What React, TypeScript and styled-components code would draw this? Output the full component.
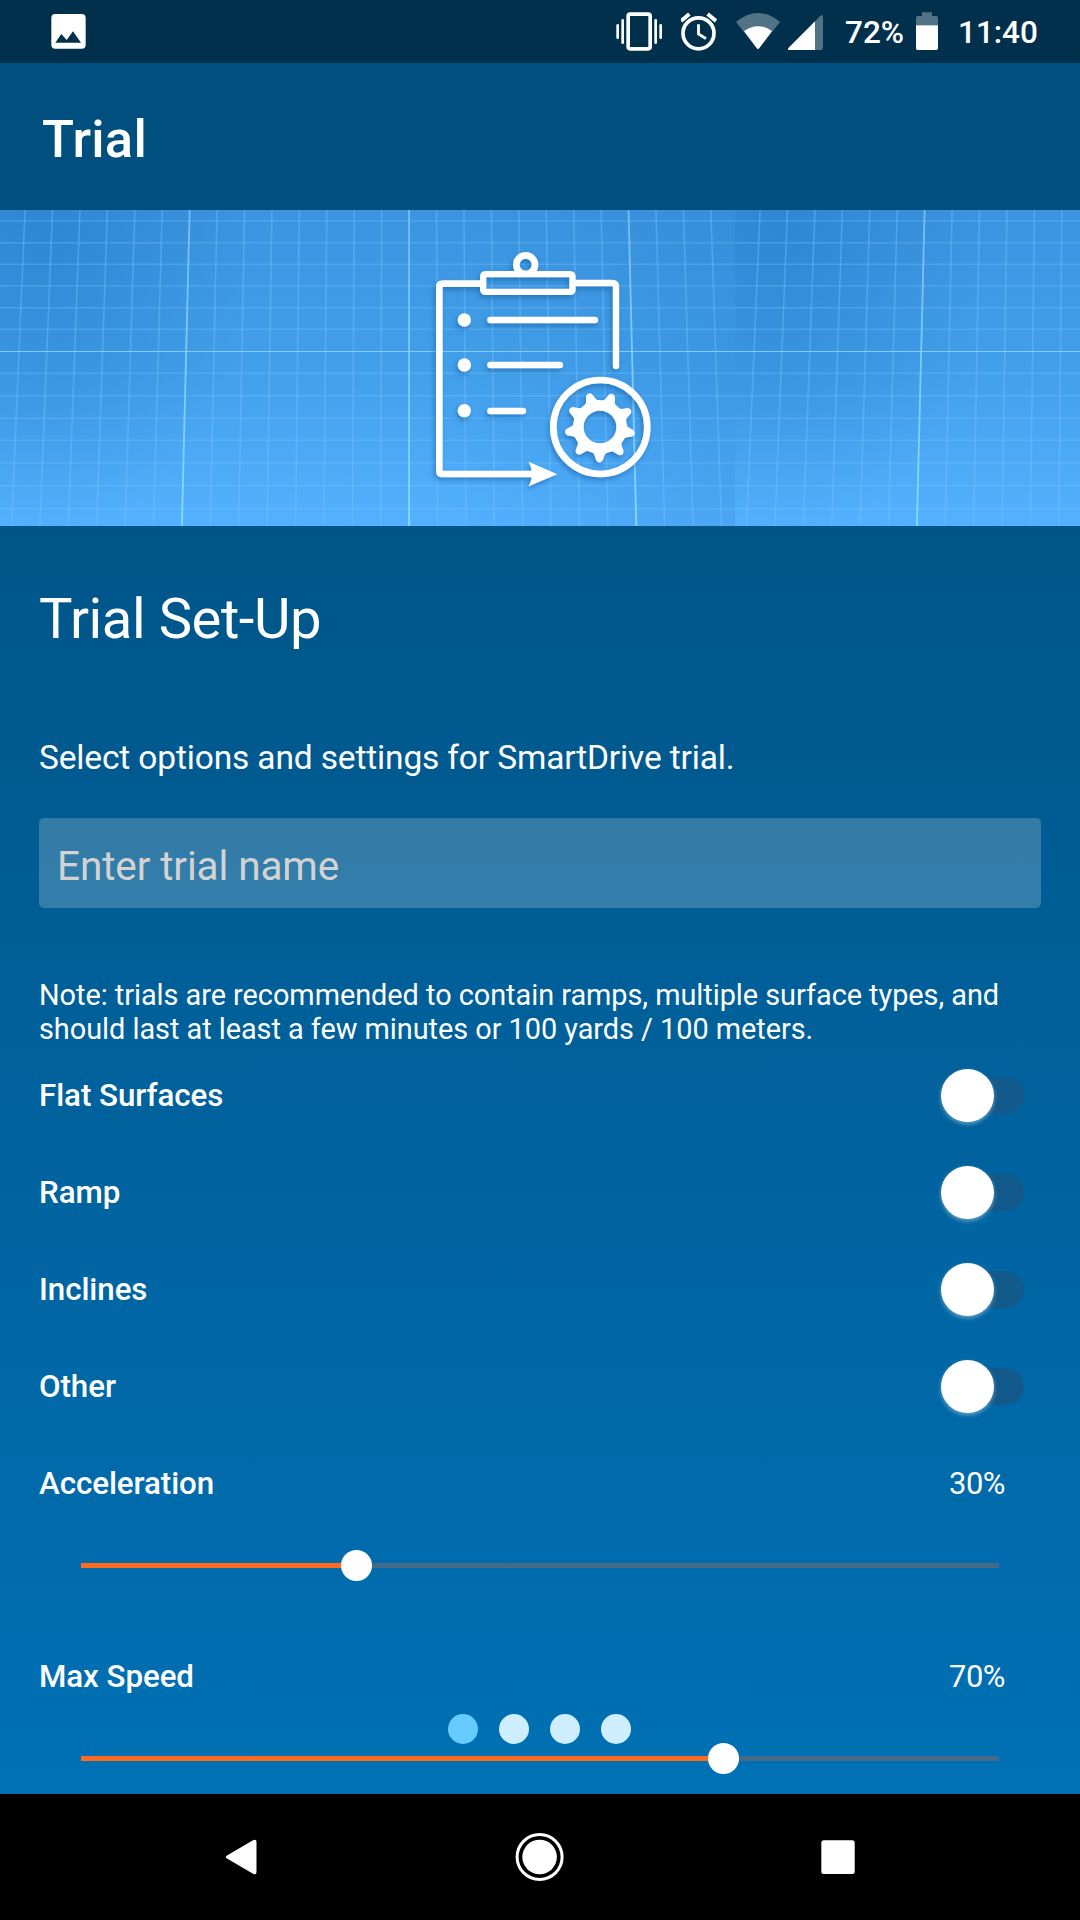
import React, { useState } from "react";
import styled, { createGlobalStyle } from "styled-components";

const GlobalStyle = createGlobalStyle`
  *, *::before, *::after { box-sizing: border-box; }
  html, body { margin: 0; padding: 0; background: #000; }
`;

const Screen = styled.div`
  width: 1080px;
  height: 1920px;
  display: flex;
  flex-direction: column;
  overflow: hidden;
  color: #fff;
  font-family: Roboto, "Noto Sans", sans-serif;
`;

/* ---------- status bar ---------- */

const StatusBar = styled.header`
  flex: none;
  height: 63px;
  padding: 0 43px 0 51px;
  display: flex;
  align-items: center;
  justify-content: space-between;
  background: #00304c;
`;

const StatusGroup = styled.div`
  display: flex;
  align-items: center;
`;

const StatusIcon = styled.svg<{ $gap?: number }>`
  display: block;
  flex: none;
  margin-right: ${(p) => p.$gap ?? 0}px;
`;

const StatusText = styled.span<{ $width: number }>`
  width: ${(p) => p.$width}px;
  font-size: 31.5px;
  font-weight: 500;
  line-height: 63px;
  white-space: nowrap;
  padding-top: 1px;
`;

function PictureIcon() {
  return (
    <StatusIcon width="35" height="35" viewBox="0 0 105 105">
      <path
        fill="#fff"
        fillRule="evenodd"
        d="M13 0H92Q104 0 104 12V92Q104 104 92 104H13Q1 104 1 92V12Q1 0 13 0ZM13 86H90L66 52L47 78L31 60Z"
      />
    </StatusIcon>
  );
}

function SystemIcons() {
  return (
    <>
      <StatusIcon width="46" height="63" viewBox="48 0 138 189" $gap={19}>
        <rect x="84.500" y="42.500" width="66" height="104" rx="6" fill="none" stroke="#fff" strokeWidth="11" />
        <path d="M53 76V113M68 61V128M167 61V128M182 76V113" stroke="#fff" strokeWidth="8" strokeLinecap="round" />
      </StatusIcon>
      <StatusIcon width="36" height="63" viewBox="243 0 108 189" $gap={19}>
        <g fill="none" stroke="#fff">
          <circle cx="295.500" cy="100" r="46.500" strokeWidth="11" />
          <path d="M243 63L268 42M323 42L348 63" strokeWidth="12" />
          <path d="M295.500 73V102L318 116" strokeWidth="8.500" />
        </g>
      </StatusIcon>
      <StatusIcon width="44" height="63" viewBox="408 0 132 189" $gap={8}>
        <path d="M408 66Q474 12 540 66L478 144Q474 149 470 144Z" fill="#fff" fillOpacity=".32" />
        <path d="M432 93Q474 64 516 93L478 144Q474 150 470 144Z" fill="#fff" />
      </StatusIcon>
      <StatusIcon width="35" height="63" viewBox="564 0 105 189" $gap={22}>
        <path d="M645 64L661 47Q669 42 669 50V144Q669 150 663 150H645Z" fill="#fff" fillOpacity=".32" />
        <path d="M645 64V150H567Q561 149 566 143Z" fill="#fff" />
      </StatusIcon>
      <StatusText $width={71}>72%</StatusText>
      <StatusIcon width="22" height="63" viewBox="948 0 66 189" $gap={20}>
        <path d="M948 76V54Q948 48 954 48H966V37H996V48H1008Q1014 48 1014 54V76Z" fill="#fff" fillOpacity=".32" />
        <path d="M948 76H1014V145Q1014 150 1009 150H953Q948 150 948 145Z" fill="#fff" />
      </StatusIcon>
      <StatusText $width={79}>11:40</StatusText>
    </>
  );
}

/* ---------- action bar ---------- */

const ActionBar = styled.div`
  flex: none;
  height: 147px;
  padding: 4px 42px 0;
  display: flex;
  align-items: center;
  background: #00507f;
`;

const ActionTitle = styled.h1`
  margin: 0;
  font-size: 52.5px;
  font-weight: 500;
  line-height: 62px;
  letter-spacing: 0.25px;
`;

/* ---------- banner ---------- */

const Banner = styled.section`
  flex: none;
  height: 316px;
`;

const BannerArt = styled.svg`
  display: block;
`;

const ROWS = [11, 32.7, 54.2, 76, 97.7, 119.3, 163.3, 185.7, 208.3, 230.3, 253, 275.7, 298.7];
const COLUMNS = Array.from({ length: 29 }, (_, i) => i - 16);
const TILE = 735;

function BlueprintTile() {
  return (
    <g>
      <rect width={TILE} height="316" fill="url(#sky)" />
      <rect width={TILE} height="316" fill="url(#shadeLeft)" />
      <rect width={TILE} height="316" fill="url(#shadeRight)" />
      {ROWS.map((y) => (
        <path key={y} d={`M0 ${y}H${TILE}`} stroke="#7cc6ff" strokeOpacity=".33" strokeWidth="1.600" />
      ))}
      {COLUMNS.map((i) => {
        const main = i % 8 === 0;
        return (
          <path
            key={i}
            d={`M${409.1 + i * 27.43} 0L${409.1 + i * 28.4} 316`}
            stroke={main ? "url(#mainLine)" : "#7cc6ff"}
            strokeOpacity={main ? 0.9 : 0.38}
            strokeWidth={main ? 1.8 : 1.6}
          />
        );
      })}
      <path d={`M0 141.500H${TILE}`} stroke="#8fd4ff" strokeOpacity=".85" strokeWidth="1.200" />
    </g>
  );
}

function gearPath(cx: number, cy: number) {
  const point = (r: number, deg: number) => {
    const a = (deg * Math.PI) / 180;
    return `${(cx + r * Math.cos(a)).toFixed(1)} ${(cy + r * Math.sin(a)).toFixed(1)}`;
  };
  let d = "";
  for (let k = 0; k < 9; k++) {
    const a = 91 + k * 40;
    d += `${k ? "L" : "M"}${point(81, a - 14)}L${point(84, a - 11)}L${point(101, a - 5.5)}`;
    d += `Q${point(112, a)} ${point(101, a + 5.5)}L${point(84, a + 11)}L${point(81, a + 14)}`;
  }
  return `${d}ZM${cx - 49} ${cy}a49 49 0 1 0 98 0a49 49 0 1 0 -98 0Z`;
}

function ClipboardDrawing() {
  return (
    <g
      transform="translate(420 20) scale(.33333)"
      filter="url(#drop)"
      fill="none"
      stroke="#fff"
      strokeLinecap="round"
    >
      <circle cx="317" cy="104" r="28" strokeWidth="20" />
      <rect x="189.500" y="132.500" width="268" height="53" rx="6" strokeWidth="19" />
      <path d="M182 161H68Q58 161 58 171V722Q58 732 68 732H338" strokeWidth="20" strokeLinecap="butt" />
      <path d="M465 159H577Q588 159 588 170V408" strokeWidth="19" />
      <path d="M412 733L326 695Q346 733 326 769Z" fill="#fff" stroke="none" />
      <path d="M211 270H525M211 405H420M211 543H309" strokeWidth="19" />
      <g fill="#fff" stroke="none">
        <circle cx="133" cy="270" r="20" />
        <circle cx="133" cy="405" r="20" />
        <circle cx="133" cy="542" r="20" />
      </g>
      <circle cx="541" cy="591" r="141" strokeWidth="20" />
      <path d={gearPath(540, 591)} fill="#fff" fillRule="evenodd" stroke="none" />
    </g>
  );
}

function BlueprintBanner() {
  return (
    <Banner>
      <BannerArt width="1080" height="316" viewBox="0 0 1080 316">
        <defs>
          <linearGradient id="sky" x1="0" y1="0" x2="0" y2="1">
            <stop offset="0" stopColor="#3c94df" />
            <stop offset=".5" stopColor="#429fea" />
            <stop offset="1" stopColor="#54b1ff" />
          </linearGradient>
          <radialGradient id="shadeLeft" gradientUnits="userSpaceOnUse" cx="0" cy="0" r="1" gradientTransform="translate(45 0) scale(210 330)">
            <stop offset="0" stopColor="#1d73bd" stopOpacity=".42" />
            <stop offset=".5" stopColor="#1d73bd" stopOpacity=".22" />
            <stop offset="1" stopColor="#1d73bd" stopOpacity="0" />
          </radialGradient>
          <linearGradient id="shadeRight" x1="0" y1="0" x2="1" y2="0">
            <stop offset=".6" stopColor="#1d73bd" stopOpacity="0" />
            <stop offset="1" stopColor="#1d73bd" stopOpacity=".18" />
          </linearGradient>
          <linearGradient id="mainLine" gradientUnits="userSpaceOnUse" x1="0" y1="0" x2="0" y2="316">
            <stop offset="0" stopColor="#7cc0fb" />
            <stop offset="1" stopColor="#8ae0ff" />
          </linearGradient>
          <clipPath id="tile">
            <rect width={TILE} height="316" />
          </clipPath>
          <filter id="drop" x="-10%" y="-10%" width="120%" height="120%">
            <feDropShadow dx="-5" dy="9" stdDeviation="8" floodColor="#0f4f8f" floodOpacity=".42" />
          </filter>
        </defs>
        <g clipPath="url(#tile)">
          <BlueprintTile />
        </g>
        <g transform={`translate(${TILE} 0)`}>
          <g clipPath="url(#tile)">
            <BlueprintTile />
          </g>
        </g>
        <ClipboardDrawing />
      </BannerArt>
    </Banner>
  );
}

/* ---------- form ---------- */

const Content = styled.main`
  position: relative;
  flex: 1;
  min-height: 0;
  overflow: hidden;
  padding: 59px 39px 0;
  display: flex;
  flex-direction: column;
  background: linear-gradient(#005588, #0071b5);
`;

const Heading = styled.h2`
  flex: none;
  margin: 0 0 84px;
  font-size: 56.2px;
  font-weight: 400;
  line-height: 69px;
  letter-spacing: -0.45px;
`;

const Intro = styled.p`
  flex: none;
  margin: 0 0 40px;
  font-size: 33.5px;
  line-height: 40px;
  letter-spacing: -0.15px;
`;

const NameInput = styled.input`
  flex: none;
  height: 90px;
  margin: 0 0 70px;
  padding: 5px 18px 0;
  border: 0;
  border-radius: 5px;
  outline: 0;
  background: rgba(255, 255, 255, 0.2);
  color: #fff;
  font-family: inherit;
  font-size: 40.5px;
  letter-spacing: -0.12px;
  &::placeholder {
    color: #d3d3d3;
    opacity: 1;
  }
`;

const Note = styled.p`
  flex: none;
  margin: 0 0 1px;
  font-size: 28.875px;
  line-height: 34px;
  letter-spacing: -0.03px;
`;

const Row = styled.div`
  flex: none;
  height: 97px;
  display: flex;
  align-items: center;
  justify-content: space-between;
`;

const RowLabel = styled.span`
  font-size: 31.3px;
  font-weight: 500;
  line-height: 37px;
  letter-spacing: -0.06px;
`;

const RowValue = styled.span`
  margin-right: 36px;
  font-size: 30.9px;
  line-height: 37px;
  letter-spacing: -0.45px;
`;

const Switch = styled.button`
  width: 83px;
  height: 53px;
  margin-right: 17px;
  padding: 0;
  border: 0;
  background: none;
  display: grid;
  align-items: center;
`;

const SwitchTrack = styled.span`
  grid-area: 1 / 1;
  justify-self: end;
  width: 75px;
  height: 37px;
  border-radius: 19px;
  background: #125a8b;
`;

const SwitchThumb = styled.span<{ $on: boolean }>`
  grid-area: 1 / 1;
  justify-self: ${(p) => (p.$on ? "end" : "start")};
  width: 53px;
  height: 53px;
  border-radius: 50%;
  background: #fff;
  box-shadow: 0 2px 4px rgba(255, 255, 255, 0.4);
`;

const SliderArea = styled.div`
  flex: none;
  height: 96px;
  padding: 18px 42px 0;
`;

const SliderRail = styled.div`
  height: 31px;
  display: grid;
  align-items: center;
`;

const SliderTrack = styled.span`
  grid-area: 1 / 1;
  height: 5px;
  background: #466b89;
`;

const SliderFill = styled.span`
  grid-area: 1 / 1;
  height: 5px;
  background: #ff6a1f;
`;

const SliderThumb = styled.span`
  grid-area: 1 / 1;
  width: 31px;
  height: 31px;
  border-radius: 50%;
  background: #fff;
`;

const Pager = styled.div`
  position: absolute;
  left: 0;
  right: 2px;
  bottom: 50px;
  display: flex;
  justify-content: center;
  gap: 21px;
`;

const PagerDot = styled.span<{ $active: boolean }>`
  width: 30px;
  height: 30px;
  border-radius: 50%;
  background: ${(p) => (p.$active ? "#66ccff" : "#cceeff")};
`;

function ToggleRow({ label }: { label: string }) {
  const [on, setOn] = useState(false);
  return (
    <Row>
      <RowLabel>{label}</RowLabel>
      <Switch role="switch" aria-checked={on} aria-label={label} onClick={() => setOn(!on)}>
        <SwitchTrack />
        <SwitchThumb $on={on} />
      </Switch>
    </Row>
  );
}

function SliderSetting({ label, value }: { label: string; value: number }) {
  return (
    <>
      <Row>
        <RowLabel>{label}</RowLabel>
        <RowValue>{value}%</RowValue>
      </Row>
      <SliderArea>
        <SliderRail>
          <SliderTrack />
          <SliderFill style={{ width: `${value}%` }} />
          <SliderThumb style={{ marginLeft: `calc(${value}% - 15.5px)` }} />
        </SliderRail>
      </SliderArea>
    </>
  );
}

/* ---------- navigation bar ---------- */

const NavBar = styled.nav`
  flex: none;
  height: 126px;
  padding: 0 90px;
  display: grid;
  grid-template-columns: repeat(3, 1fr);
  align-items: center;
  justify-items: center;
  background: #000;
`;

const NavIcon = styled.svg`
  display: block;
`;

export default function App() {
  return (
    <>
      <GlobalStyle />
      <Screen>
        <StatusBar>
          <PictureIcon />
          <StatusGroup>
            <SystemIcons />
          </StatusGroup>
        </StatusBar>
        <ActionBar>
          <ActionTitle>Trial</ActionTitle>
        </ActionBar>
        <BlueprintBanner />
        <Content>
          <Heading>Trial Set-Up</Heading>
          <Intro>Select options and settings for SmartDrive trial.</Intro>
          <NameInput placeholder="Enter trial name" />
          <Note>
            Note: trials are recommended to contain ramps, multiple surface types, and
            <br />
            should last at least a few minutes or 100 yards / 100 meters.
          </Note>
          {["Flat Surfaces", "Ramp", "Inclines", "Other"].map((label) => (
            <ToggleRow key={label} label={label} />
          ))}
          <SliderSetting label="Acceleration" value={30} />
          <SliderSetting label="Max Speed" value={70} />
          <Pager>
            {[0, 1, 2, 3].map((page) => (
              <PagerDot key={page} $active={page === 0} />
            ))}
          </Pager>
        </Content>
        <NavBar>
          <NavIcon width="60" height="60" viewBox="210 1827 60 60">
            <path
              d="M227 1855.500L253 1840.200Q256.500 1838.500 256.500 1842V1872Q256.500 1875.500 253 1873.800L227 1858.500Q224.500 1857 227 1855.500Z"
              fill="#fff"
            />
          </NavIcon>
          <NavIcon width="60" height="60" viewBox="510 1826.500 60 60">
            <circle cx="539.600" cy="1856.500" r="22.500" fill="none" stroke="#fff" strokeWidth="3" />
            <circle cx="539.600" cy="1856.500" r="17.300" fill="#fff" />
          </NavIcon>
          <NavIcon width="60" height="60" viewBox="810 1827 60 60">
            <rect x="821.300" y="1840.300" width="33.400" height="33.700" rx="2.500" fill="#fff" />
          </NavIcon>
        </NavBar>
      </Screen>
    </>
  );
}
